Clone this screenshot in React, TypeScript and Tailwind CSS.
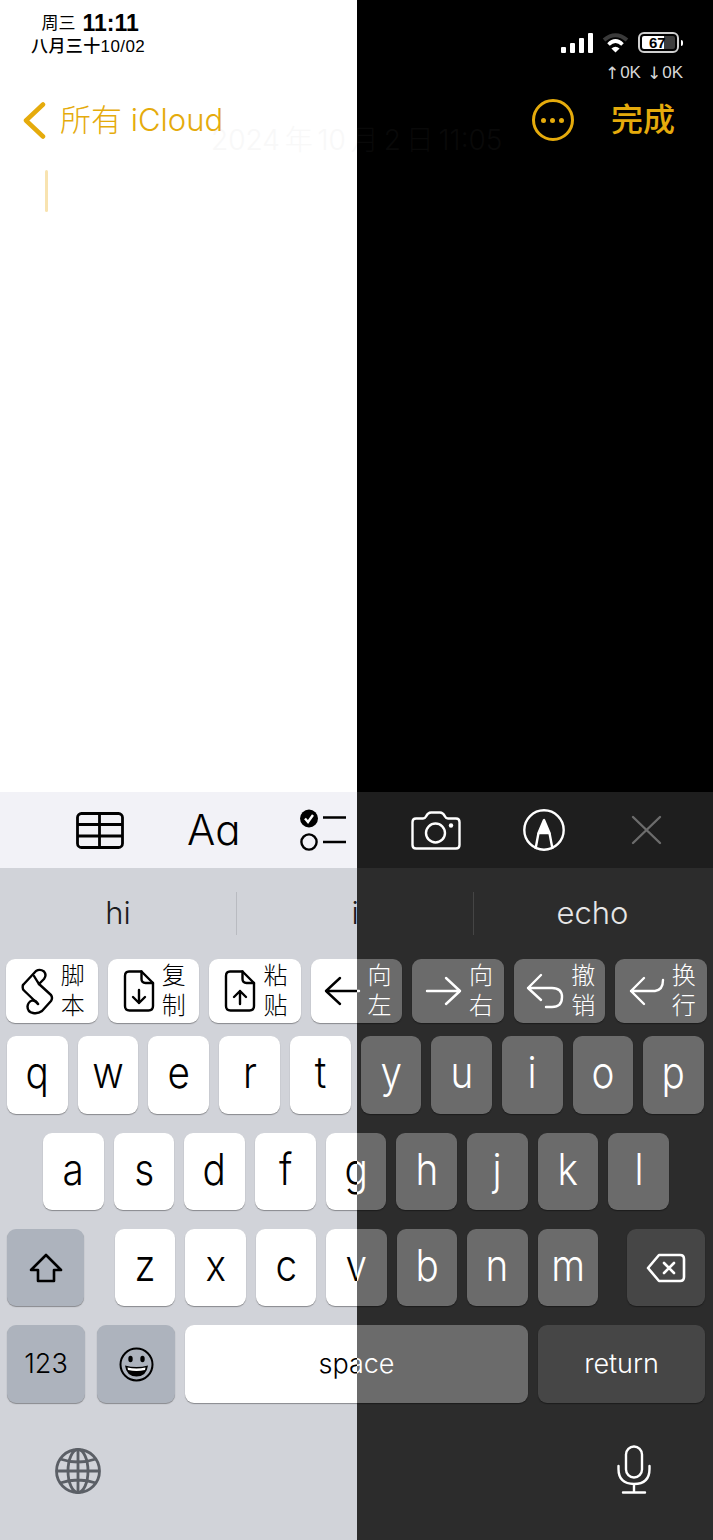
const inter = "font-['Inter','Noto_Sans_CJK_SC',sans-serif] font-light"

type Theme = {
    page: string
    status: string
    netSpeed: string
    wifiOuter: string
    battery: string
    batteryFill: string
    batteryRest: string
    batteryText: string
    ghost: string
    toolbar: string
    keyboard: string
    divider: string
    suggestion: string
    key: string
    fnKey: string
    ink: string
    globe: string
}

const light: Theme = {
    page: 'bg-white',
    status: 'text-black',
    netSpeed: 'text-[#333333]',
    wifiOuter: '#cccccc',
    battery: 'border-[#333333] bg-white',
    batteryFill: 'bg-black',
    batteryRest: 'bg-[#cccccc]',
    batteryText: 'text-white',
    ghost: 'text-[#f8f8f8]',
    toolbar: 'bg-[#f2f2f7] text-black',
    keyboard: 'bg-[#d1d3d9]',
    divider: 'bg-[#b9bbc1]',
    suggestion: 'text-[#1c1c1e]',
    key: 'bg-white text-black shadow-[0_1px_1px_#88898d]',
    fnKey: 'bg-[#adb3bd] text-black shadow-[0_1px_1px_#88898d]',
    ink: 'text-black',
    globe: 'text-[#5b5f66]',
}

const dark: Theme = {
    page: 'bg-black',
    status: 'text-white',
    netSpeed: 'text-[#d8d8d8]',
    wifiOuter: '#3a3a3a',
    battery: 'border-[#cfcfcf] bg-black',
    batteryFill: 'bg-white',
    batteryRest: 'bg-[#3c3c3c]',
    batteryText: 'text-black',
    ghost: 'text-[#090909]',
    toolbar: 'bg-[#1e1e1e] text-white',
    keyboard: 'bg-[#2c2c2c]',
    divider: 'bg-[#454545]',
    suggestion: 'text-[#e6e6e6]',
    key: 'bg-[#6b6b6b] text-white shadow-[0_1px_1px_#1c1c1c]',
    fnKey: 'bg-[#464646] text-white shadow-[0_1px_1px_#1c1c1c]',
    ink: 'text-white',
    globe: 'text-white',
}

const Line = ({ w, h, d, sw = 2.4 }: { w: number; h: number; d: string; sw?: number }) => (
    <svg
        width={w}
        height={h}
        viewBox={`0 0 ${w} ${h}`}
        fill="none"
        stroke="currentColor"
        strokeWidth={sw}
        strokeLinecap="round"
        strokeLinejoin="round"
        className="shrink-0"
    >
        <path d={d} />
    </svg>
)

const StatusBar = ({ t }: { t: Theme }) => (
    <div className={`flex h-[90px] justify-between ${t.status}`}>
        <div className="flex flex-col items-center pl-[31px] pt-[11px]">
            <div className="flex h-[25px] items-center gap-[7px] pl-[4px]">
                <span className="text-[17px]">周三</span>
                <span className="inline-block text-[23px] font-bold leading-[25px]">11:11</span>
            </div>
            <div className="flex h-[22px] items-center text-[17px] font-medium tracking-[0.4px]">八月三十10/02</div>
        </div>
        <div className="flex flex-col items-end pr-[30px] pt-[32px]">
            <div className="flex items-center">
                <div className="flex h-[20px] items-end gap-[4px]">
                    <div className="h-[6px] w-[5px] rounded-[1px] bg-current" />
                    <div className="h-[10px] w-[5px] rounded-[1px] bg-current" />
                    <div className="h-[15px] w-[5px] rounded-[1px] bg-current" />
                    <div className="h-[20px] w-[5px] rounded-[1px] bg-current" />
                </div>
                <svg width="27" height="20" viewBox="0 0 27 20" className="ml-[9px]" fill="none">
                    <path d="M2 7 Q13.5 -2.5 25 7" stroke={t.wifiOuter} strokeWidth="4" />
                    <path d="M6.5 11.5 Q13.5 4.5 20.5 11.5" stroke="currentColor" strokeWidth="3.6" />
                    <path d="M13.5 19.5 L9.4 15.5 Q13.5 12 17.6 15.5 Z" fill="currentColor" />
                </svg>
                <div className={`relative ml-[9px] flex h-[21px] w-[41px] overflow-hidden rounded-[6px] border-2 p-[2px] ${t.battery}`}>
                    <div className={`h-full w-[22px] rounded-l-[2px] ${t.batteryFill}`} />
                    <div className={`h-full flex-1 rounded-r-[2px] ${t.batteryRest}`} />
                    <span className={`absolute left-[9px] top-0 text-[15px] font-bold leading-[17px] ${t.batteryText}`}>67</span>
                </div>
                <div className="ml-[2px] h-[6px] w-[2px] rounded-r-[2px] bg-current" />
            </div>
            <div className={`mt-[13px] flex items-center gap-[6px] text-[17px] leading-[14px] ${t.netSpeed}`}>
                <span className="flex items-center gap-[1px]">
                    <span className="font-['DejaVu_Sans',sans-serif] text-[17px]">↑</span>0K
                </span>
                <span className="flex items-center gap-[1px]">
                    <span className="font-['DejaVu_Sans',sans-serif] text-[17px]">↓</span>0K
                </span>
            </div>
        </div>
    </div>
)

const NavBar = ({ t }: { t: Theme }) => (
    <div className="relative flex h-[60px] items-center text-[#e5ab0c]">
        <div className={`absolute left-[211px] top-[34px] whitespace-nowrap text-[28px] leading-[32px] [word-spacing:-3px] ${inter} ${t.ghost}`}>2024 年 10 月 2 日 11:05</div>
        <div className="relative ml-[22px]">
            <Line w={24} h={37} d="M21 2.5 L4 18.5 L21 34.5" sw={4.5} />
        </div>
        <span className={`relative ml-[14px] whitespace-nowrap text-[31px] leading-[40px] ${inter}`}>所有 iCloud</span>
        <div className="relative ml-auto flex h-[42px] w-[42px] items-center justify-center gap-[4px] rounded-full border-[3px] border-current">
            <div className="h-[5px] w-[5px] rounded-full bg-current" />
            <div className="h-[5px] w-[5px] rounded-full bg-current" />
            <div className="h-[5px] w-[5px] rounded-full bg-current" />
        </div>
        <span className="relative ml-[37px] mr-[38px] text-[32px] font-medium leading-[40px]">完成</span>
    </div>
)

const TableIcon = () => (
    <svg width="48" height="37" viewBox="0 0 48 37" fill="none" stroke="currentColor" strokeWidth="2.8" className="shrink-0">
        <rect x="1.5" y="1.5" width="45" height="34" rx="4" />
        <path d="M1.5 12.5 H46.5 M1.5 24 H46.5 M23.5 1.5 V35.5" />
    </svg>
)

const ChecklistIcon = () => (
    <svg width="47" height="42" viewBox="0 0 47 42" fill="none" stroke="currentColor" strokeWidth="2.4" className="shrink-0">
        <circle cx="9" cy="9.5" r="9" fill="currentColor" stroke="none" />
        <path d="M5 9.5 L8 13 L13 6" stroke="white" strokeWidth="2.4" />
        <circle cx="9" cy="33" r="7.6" />
        <path d="M23 8.5 H46 M23 33 H46" />
    </svg>
)

const CameraIcon = () => (
    <svg width="50" height="39" viewBox="0 0 50 39" fill="none" stroke="currentColor" strokeWidth="2.4" strokeLinejoin="round" className="shrink-0">
        <path d="M5 7.5 H12 Q14 7.5 15 5.5 Q17 1.5 20 1.5 H29 Q32 1.5 34 5.5 Q35 7.5 37 7.5 H45 Q48.5 7.5 48.5 11 V34 Q48.5 37.5 45 37.5 H5 Q1.5 37.5 1.5 34 V11 Q1.5 7.5 5 7.5 Z" />
        <circle cx="24.5" cy="22" r="9.5" />
        <circle cx="40" cy="14.5" r="2.2" fill="currentColor" stroke="none" />
    </svg>
)

const PenIcon = () => (
    <svg width="42" height="42" viewBox="0 0 42 42" fill="none" stroke="currentColor" strokeWidth="2.4" strokeLinejoin="round" className="shrink-0">
        <circle cx="21" cy="21" r="19.7" />
        <path d="M15.5 24 L12.5 40 M26.5 24 L29.5 40" />
        <path d="M21 11 L15.5 24 H26.5 Z" fill="currentColor" />
    </svg>
)

const Toolbar = ({ t }: { t: Theme }) => (
    <div className={`flex h-[76px] items-center pl-[76px] ${t.toolbar}`}>
        <TableIcon />
        <span className={`ml-[63px] w-[50px] whitespace-nowrap text-[42px] leading-[40px] ${inter}`}>Aɑ</span>
        <div className="ml-[63px]">
            <ChecklistIcon />
        </div>
        <div className="ml-[64px]">
            <CameraIcon />
        </div>
        <div className="ml-[62px]">
            <PenIcon />
        </div>
        <div className="ml-[66px] text-[#6c6c6c]">
            <Line w={31} h={30} d="M2 2 L29 28 M29 2 L2 28" sw={2.4} />
        </div>
    </div>
)

const Suggestions = ({ t }: { t: Theme }) => (
    <div className={`flex h-[91px] items-center pb-[1px] text-[31px] ${inter} ${t.suggestion}`}>
        <div className="flex w-[236px] justify-center">hi</div>
        <div className={`h-[43px] w-px ${t.divider}`} />
        <div className="flex w-[236px] justify-center">i</div>
        <div className={`h-[43px] w-px ${t.divider}`} />
        <div className="flex flex-1 justify-center pr-[2px]">echo</div>
    </div>
)

const ScrollIcon = () => (
    <svg width="33" height="47" viewBox="7 7 33 47" fill="none" stroke="currentColor" strokeWidth="2.4" strokeLinejoin="round" strokeLinecap="round" className="shrink-0">
        <path d="M9 24 L22 10 Q26 7.5 30 10.5 Q33 14 30 18 L25 23 L37 34 Q39 37 37 40 L28 50 Q24 53 19 52 Q13.5 51 13.5 45.5 Q14 41 18 39.5 Q22 39 24 43" />
        <path d="M9 24 Q8 27.5 10 29.5 L24 43" />
        <path d="M20 15 Q23 20 25 23" />
    </svg>
)

const DocIcon = ({ up }: { up?: boolean }) => (
    <svg width="32" height="42" viewBox="0 0 31 42" fill="none" stroke="currentColor" strokeWidth="2.4" strokeLinejoin="round" strokeLinecap="round" className="shrink-0">
        <path d="M5.5 1.5 H18 L29.5 13 V36 Q29.5 40.5 25 40.5 H6 Q1.5 40.5 1.5 36 V6 Q1.5 1.5 5.5 1.5 Z" />
        <path d="M18 1.5 V9 Q18 13 22 13 H29.5" />
        {up ? <path d="M15.5 34 V21 M9.5 27 L15.5 21 L21.5 27" /> : <path d="M15.5 20 V33 M9.5 27 L15.5 33 L21.5 27" />}
    </svg>
)

const Shortcut = ({ t, icon, top, bottom }: { t: Theme; icon: React.ReactNode; top: string; bottom: string }) => (
    <div className={`flex h-[64px] flex-1 items-center justify-center gap-[7px] rounded-[9px] pl-[2px] ${t.key}`}>
        {icon}
        <div className={`flex flex-col text-[24px] leading-[30px] ${inter}`}>
            <span>{top}</span>
            <span>{bottom}</span>
        </div>
    </div>
)

const Key = ({ t, label }: { t: Theme; label: string }) => (
    <div className={`flex flex-1 items-center justify-center rounded-[9px] pb-[6px] ${t.key}`}>
        <span className={`inline-block scale-x-[0.88] text-[44px] leading-[50px] ${inter}`}>{label}</span>
    </div>
)

const Keyboard = ({ t }: { t: Theme }) => (
    <div className={`flex h-[672px] flex-col ${t.keyboard}`}>
        <Suggestions t={t} />
        <div className="flex gap-[10px] px-[6px]">
            <Shortcut t={t} icon={<ScrollIcon />} top="脚" bottom="本" />
            <Shortcut t={t} icon={<DocIcon />} top="复" bottom="制" />
            <Shortcut t={t} icon={<DocIcon up />} top="粘" bottom="贴" />
            <Shortcut t={t} icon={<Line w={37} h={30} d="M35 15 H2 M16 2 L2 15 L16 28" />} top="向" bottom="左" />
            <Shortcut t={t} icon={<Line w={37} h={30} d="M2 15 H35 M21 2 L35 15 L21 28" />} top="向" bottom="右" />
            <Shortcut t={t} icon={<Line w={38} h={36} d="M15 2 L2 15 L15 27 M2 15 H26 Q36 15 36 24 Q36 34 26 34 H20" />} top="撤" bottom="销" />
            <Shortcut t={t} icon={<Line w={36} h={30} d="M15 2 L2 15 L15 28 M2 15 H26 Q34 14 34 4" />} top="换" bottom="行" />
        </div>
        <div className="mt-[13px] flex h-[78px] gap-[10px] pl-[7px] pr-[9px]">
            {'qwertyuiop'.split('').map((c) => (
                <Key key={c} t={t} label={c} />
            ))}
        </div>
        <div className="mt-[19px] flex h-[77px] gap-[10px] pl-[43px] pr-[44px]">
            {'asdfghjkl'.split('').map((c) => (
                <Key key={c} t={t} label={c} />
            ))}
        </div>
        <div className="mt-[19px] flex h-[77px] pl-[7px] pr-[8px]">
            <div className={`flex w-[77px] items-center justify-center rounded-[9px] ${t.fnKey}`}>
                <Line w={34} h={30} d="M17 2 L32 17 H25 V28 H9 V17 H2 Z" sw={2.6} />
            </div>
            <div className="ml-[31px] flex w-[483px] gap-[10px]">
                {'zxcvbnm'.split('').map((c) => (
                    <Key key={c} t={t} label={c} />
                ))}
            </div>
            <div className={`ml-[29px] flex flex-1 items-center justify-center rounded-[9px] ${t.fnKey}`}>
                <svg width="40" height="30" viewBox="0 0 40 30" fill="none" stroke="currentColor" strokeWidth="2.6" strokeLinejoin="round" strokeLinecap="round">
                    <path d="M13 2 H34 Q38 2 38 6 V24 Q38 28 34 28 H13 L2 15 Z" />
                    <path d="M18 10 L28 20 M28 10 L18 20" />
                </svg>
            </div>
        </div>
        <div className={`mt-[19px] flex h-[78px] pl-[7px] pr-[8px] ${inter}`}>
            <div className={`flex w-[78px] items-center justify-center rounded-[9px] text-[27px] ${t.fnKey}`}>123</div>
            <div className={`ml-[12px] flex w-[78px] items-center justify-center rounded-[9px] ${t.fnKey}`}>
                <svg width="35" height="35" viewBox="0 0 35 35" fill="none" stroke="currentColor" strokeWidth="2">
                    <circle cx="17.5" cy="17.5" r="16" />
                    <ellipse cx="11.5" cy="12" rx="2.2" ry="3.2" fill="currentColor" stroke="none" />
                    <ellipse cx="23.5" cy="12" rx="2.2" ry="3.2" fill="currentColor" stroke="none" />
                    <path d="M6 18.5 Q17.5 21.5 29 18.5 Q27.5 29.5 17.5 29.5 Q7.5 29.5 6 18.5 Z" fill="currentColor" stroke="none" />
                    <path d="M8.5 20.5 Q17.5 22.5 26.5 20.5 L26 23 Q17.5 25 9 23 Z" fill="white" stroke="none" />
                </svg>
            </div>
            <div className={`ml-[10px] flex w-[343px] items-center justify-center rounded-[9px] text-[27px] ${t.key}`}>space</div>
            <div className={`ml-[10px] flex flex-1 items-center justify-center rounded-[9px] text-[27px] ${t.fnKey}`}>return</div>
        </div>
        <div className="flex flex-1 items-start justify-between pl-[55px] pr-[62px] pt-[45px]">
            <svg width="46" height="46" viewBox="0 0 46 46" fill="none" stroke="currentColor" strokeWidth="2.8" className={t.globe}>
                <circle cx="23" cy="23" r="21.5" />
                <ellipse cx="23" cy="23" rx="10" ry="21.5" />
                <path d="M23 1.5 V44.5 M1.5 23 H44.5 M5 11 Q23 17 41 11 M5 35 Q23 29 41 35" />
            </svg>
            <div className={`-mt-[3px] ${t.ink}`}>
                <svg width="34" height="49" viewBox="0 0 34 49" fill="none" stroke="currentColor" strokeWidth="2.4" strokeLinecap="round">
                    <rect x="9" y="1.5" width="16" height="31" rx="8" />
                    <path d="M1.5 21 V24 Q1.5 39 17 39 Q32.5 39 32.5 24 V21 M17 39 V47.5 M6 47.5 H28" />
                </svg>
            </div>
        </div>
    </div>
)

const Screen = ({ t }: { t: Theme }) => (
    <div className={`flex h-[1540px] w-[713px] flex-col font-['Liberation_Sans','Noto_Sans_CJK_SC',sans-serif] ${t.page}`}>
        <StatusBar t={t} />
        <NavBar t={t} />
        <div className="flex-1 pl-[45px] pt-[20px]">
            <div className="h-[42px] w-[3px] rounded-full bg-[#f8e3b0]" />
        </div>
        <Toolbar t={t} />
        <Keyboard t={t} />
    </div>
)

const App = () => (
    <div className="relative h-[1540px] w-[713px] overflow-hidden">
        <Screen t={light} />
        <div className="absolute inset-y-0 left-[357px] right-0 overflow-hidden">
            <div className="-ml-[357px]">
                <Screen t={dark} />
            </div>
        </div>
    </div>
)

export default App
